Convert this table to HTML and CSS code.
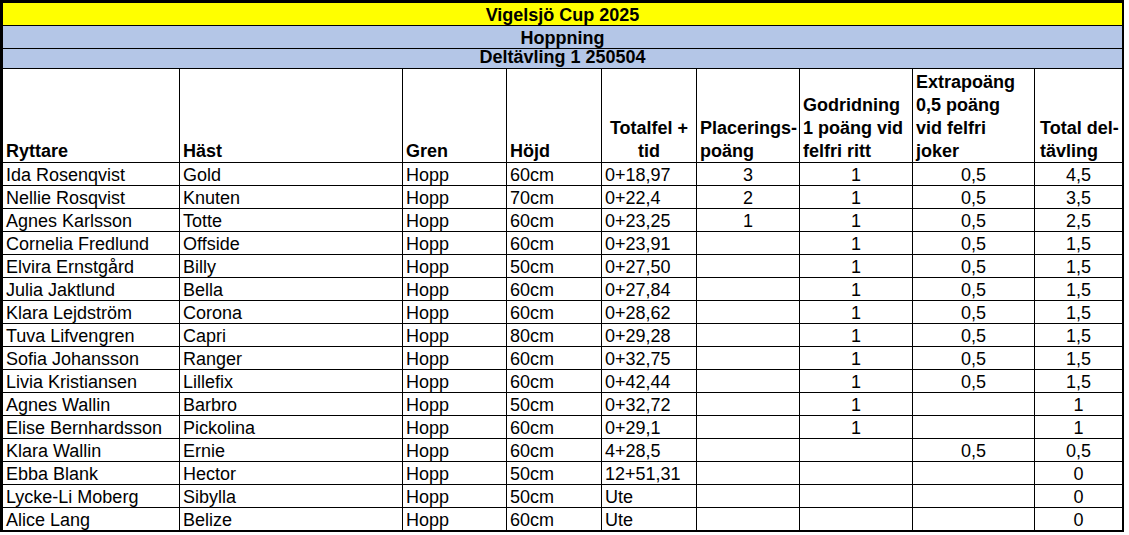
FILE: index.html
```html
<!DOCTYPE html>
<html lang="sv">
<head>
<meta charset="utf-8">
<title>Vigelsjö Cup 2025</title>
<link rel="stylesheet" href="styles.css">
</head>
<body>
<div class="sheet">
  <div class="title yellow">Vigelsjö Cup 2025</div>
  <div class="title blue">Hoppning</div>
  <div class="title blue short">Deltävling 1 250504</div>

  <div class="hd"><span>Ryttare</span></div>
  <div class="hd"><span>Häst</span></div>
  <div class="hd"><span>Gren</span></div>
  <div class="hd"><span>Höjd</span></div>
  <div class="hd center"><span>Totalfel +</span><span>tid</span></div>
  <div class="hd"><span>Placerings-</span><span>poäng</span></div>
  <div class="hd"><span>Godridning</span><span>1 poäng vid</span><span>felfri ritt</span></div>
  <div class="hd"><span>Extrapoäng</span><span>0,5 poäng</span><span>vid felfri</span><span>joker</span></div>
  <div class="hd indent"><span>Total del-</span><span>tävling</span></div>

  <div class="c">Ida Rosenqvist</div><div class="c">Gold</div><div class="c">Hopp</div><div class="c">60cm</div><div class="c">0+18,97</div><div class="c n">3</div><div class="c n">1</div><div class="c n">0,5</div><div class="c n">4,5</div>
  <div class="c">Nellie Rosqvist</div><div class="c">Knuten</div><div class="c">Hopp</div><div class="c">70cm</div><div class="c">0+22,4</div><div class="c n">2</div><div class="c n">1</div><div class="c n">0,5</div><div class="c n">3,5</div>
  <div class="c">Agnes Karlsson</div><div class="c">Totte</div><div class="c">Hopp</div><div class="c">60cm</div><div class="c">0+23,25</div><div class="c n">1</div><div class="c n">1</div><div class="c n">0,5</div><div class="c n">2,5</div>
  <div class="c">Cornelia Fredlund</div><div class="c">Offside</div><div class="c">Hopp</div><div class="c">60cm</div><div class="c">0+23,91</div><div class="c n"></div><div class="c n">1</div><div class="c n">0,5</div><div class="c n">1,5</div>
  <div class="c">Elvira Ernstgård</div><div class="c">Billy</div><div class="c">Hopp</div><div class="c">50cm</div><div class="c">0+27,50</div><div class="c n"></div><div class="c n">1</div><div class="c n">0,5</div><div class="c n">1,5</div>
  <div class="c">Julia Jaktlund</div><div class="c">Bella</div><div class="c">Hopp</div><div class="c">60cm</div><div class="c">0+27,84</div><div class="c n"></div><div class="c n">1</div><div class="c n">0,5</div><div class="c n">1,5</div>
  <div class="c">Klara Lejdström</div><div class="c">Corona</div><div class="c">Hopp</div><div class="c">60cm</div><div class="c">0+28,62</div><div class="c n"></div><div class="c n">1</div><div class="c n">0,5</div><div class="c n">1,5</div>
  <div class="c">Tuva Lifvengren</div><div class="c">Capri</div><div class="c">Hopp</div><div class="c">80cm</div><div class="c">0+29,28</div><div class="c n"></div><div class="c n">1</div><div class="c n">0,5</div><div class="c n">1,5</div>
  <div class="c">Sofia Johansson</div><div class="c">Ranger</div><div class="c">Hopp</div><div class="c">60cm</div><div class="c">0+32,75</div><div class="c n"></div><div class="c n">1</div><div class="c n">0,5</div><div class="c n">1,5</div>
  <div class="c">Livia Kristiansen</div><div class="c">Lillefix</div><div class="c">Hopp</div><div class="c">60cm</div><div class="c">0+42,44</div><div class="c n"></div><div class="c n">1</div><div class="c n">0,5</div><div class="c n">1,5</div>
  <div class="c">Agnes Wallin</div><div class="c">Barbro</div><div class="c">Hopp</div><div class="c">50cm</div><div class="c">0+32,72</div><div class="c n"></div><div class="c n">1</div><div class="c n"></div><div class="c n">1</div>
  <div class="c">Elise Bernhardsson</div><div class="c">Pickolina</div><div class="c">Hopp</div><div class="c">60cm</div><div class="c">0+29,1</div><div class="c n"></div><div class="c n">1</div><div class="c n"></div><div class="c n">1</div>
  <div class="c">Klara Wallin</div><div class="c">Ernie</div><div class="c">Hopp</div><div class="c">60cm</div><div class="c">4+28,5</div><div class="c n"></div><div class="c n"></div><div class="c n">0,5</div><div class="c n">0,5</div>
  <div class="c">Ebba Blank</div><div class="c">Hector</div><div class="c">Hopp</div><div class="c">50cm</div><div class="c">12+51,31</div><div class="c n"></div><div class="c n"></div><div class="c n"></div><div class="c n">0</div>
  <div class="c">Lycke-Li Moberg</div><div class="c">Sibylla</div><div class="c">Hopp</div><div class="c">50cm</div><div class="c">Ute</div><div class="c n"></div><div class="c n"></div><div class="c n"></div><div class="c n">0</div>
  <div class="c">Alice Lang</div><div class="c">Belize</div><div class="c">Hopp</div><div class="c">60cm</div><div class="c">Ute</div><div class="c n"></div><div class="c n"></div><div class="c n"></div><div class="c n">0</div>
</div>
</body>
</html>
```

FILE: styles.css
```css
html, body {
  margin: 0;
  padding: 0;
  background: #ffffff;
}

body {
  font-family: "Liberation Sans", Arial, sans-serif;
  font-size: 18px;
  color: #000000;
}

.sheet {
  display: inline-grid;
  grid-template-columns: 176px 222px 103px 94px 94px 102px 112px 121px 87px;
  gap: 1px;
  background: #000000;
  border-style: solid;
  border-color: #000000;
  border-width: 3px 2px 2px 3px;
}

.title {
  grid-column: 1 / -1;
  height: 21px;
  padding-top: 1px;
  line-height: 22px;
  text-align: center;
  font-weight: bold;
  white-space: nowrap;
}

.yellow {
  background: #ffff00;
}

.blue {
  background: #b4c6e7;
}

.short {
  height: 19px;
  padding-top: 0;
  line-height: 16px;
}

.hd {
  height: 93px;
  background: #ffffff;
  display: flex;
  flex-direction: column;
  justify-content: flex-end;
  padding: 0 0 0 3px;
  line-height: 23px;
  font-weight: bold;
  white-space: nowrap;
}

.hd span:last-child {
  margin-bottom: -1px;
}

.hd.center {
  align-items: center;
  padding: 0;
}

.hd.indent {
  padding-left: 5px;
}

.c {
  height: 21px;
  padding: 1px 0 0 3px;
  line-height: 22px;
  background: #ffffff;
  white-space: nowrap;
}

.c.n {
  text-align: center;
  padding: 1px 0 0 0;
}
```
